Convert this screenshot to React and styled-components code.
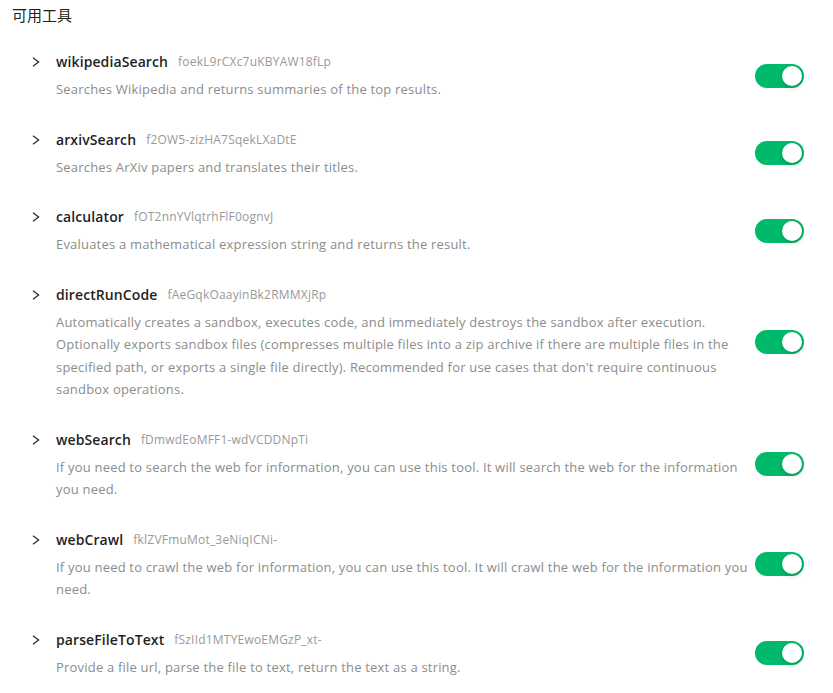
import React, { useState } from 'react';
import styled, { createGlobalStyle } from 'styled-components';

const GlobalStyle = createGlobalStyle`
  body {
    margin: 0;
    background: #fff;
    font-family: "Open Sans", "Noto Sans", "Noto Sans CJK SC", sans-serif;
  }
`;

const Page = styled.div`
  padding: 5px 12px 0 12px;
`;

const Title = styled.div`
  font-family: "Noto Sans CJK SC", sans-serif;
  font-size: 15px;
  line-height: 20px;
  color: #1f1f1f;
  margin-bottom: 11px;
`;

const List = styled.div`
  display: flex;
  flex-direction: column;
`;

const Row = styled.div`
  display: flex;
  align-items: center;
  padding: 15px 0 13.4px;
`;

const Chevron = styled.div`
  width: 44px;
  flex-shrink: 0;
  align-self: flex-start;
  height: 22px;
  display: flex;
  align-items: center;
  padding-left: 20px;
  box-sizing: border-box;
`;

const Content = styled.div`
  width: 700px;
  flex-shrink: 0;
`;

const Header = styled.div`
  display: flex;
  align-items: center;
  gap: 10px;
  height: 22px;
  line-height: 22px;
`;

const Name = styled.span`
  font-size: 14px;
  font-weight: 600;
  letter-spacing: 0.1px;
  color: #1f1f1f;
`;

const Id = styled.span`
  font-size: 12px;
  letter-spacing: 0.2px;
  color: #999;
`;

const Desc = styled.div`
  margin-top: 5px;
  font-size: 13px;
  letter-spacing: 0.2px;
  line-height: 22.3px;
  color: #8c8c8c;
`;

const Track = styled.button`
  width: 49px;
  height: 24px;
  margin-left: -1px;
  border: none;
  padding: 0;
  border-radius: 12px;
  background: ${p => (p.on ? '#00b96b' : '#bfbfbf')};
  position: relative;
  cursor: pointer;
  flex-shrink: 0;
`;

const Knob = styled.span`
  position: absolute;
  top: 2px;
  left: ${p => (p.on ? '27px' : '2px')};
  width: 20px;
  height: 20px;
  border-radius: 50%;
  background: #fff;
  box-shadow: 0 2px 4px rgba(0, 35, 11, 0.2);
`;

const tools = [
  { name: 'wikipediaSearch', id: 'foekL9rCXc7uKBYAW18fLp', desc: 'Searches Wikipedia and returns summaries of the top results.' },
  { name: 'arxivSearch', id: 'f2OW5-zizHA7SqekLXaDtE', desc: 'Searches ArXiv papers and translates their titles.' },
  { name: 'calculator', id: 'fOT2nnYVlqtrhFlF0ognvJ', desc: 'Evaluates a mathematical expression string and returns the result.' },
  { name: 'directRunCode', id: 'fAeGqkOaayinBk2RMMXjRp', desc: "Automatically creates a sandbox, executes code, and immediately destroys the sandbox after execution. Optionally exports sandbox files (compresses multiple files into a zip archive if there are multiple files in the specified path, or exports a single file directly). Recommended for use cases that don't require continuous sandbox operations." },
  { name: 'webSearch', id: 'fDmwdEoMFF1-wdVCDDNpTi', desc: 'If you need to search the web for information, you can use this tool. It will search the web for the information you need.' },
  { name: 'webCrawl', id: 'fklZVFmuMot_3eNiqICNi-', desc: 'If you need to crawl the web for information, you can use this tool. It will crawl the web for the information you need.' },
  { name: 'parseFileToText', id: 'fSzIId1MTYEwoEMGzP_xt-', desc: 'Provide a file url, parse the file to text, return the text as a string.' },
];

function ChevronIcon() {
  return (
    <svg width="8" height="10" viewBox="0 0 8 10" fill="none">
      <path d="M1 0.8 L6.6 5 L1 9.2" stroke="#2b2b2b" strokeWidth="1.3" />
    </svg>
  );
}

function ToolRow({ tool }) {
  const [on, setOn] = useState(true);
  return (
    <Row>
      <Chevron><ChevronIcon /></Chevron>
      <Content>
        <Header>
          <Name>{tool.name}</Name>
          <Id>{tool.id}</Id>
        </Header>
        <Desc>{tool.desc}</Desc>
      </Content>
      <Track on={on} onClick={() => setOn(!on)}>
        <Knob on={on} />
      </Track>
    </Row>
  );
}

export default function App() {
  return (
    <Page>
      <GlobalStyle />
      <Title>可用工具</Title>
      <List>
        {tools.map(t => <ToolRow key={t.name} tool={t} />)}
      </List>
    </Page>
  );
}
